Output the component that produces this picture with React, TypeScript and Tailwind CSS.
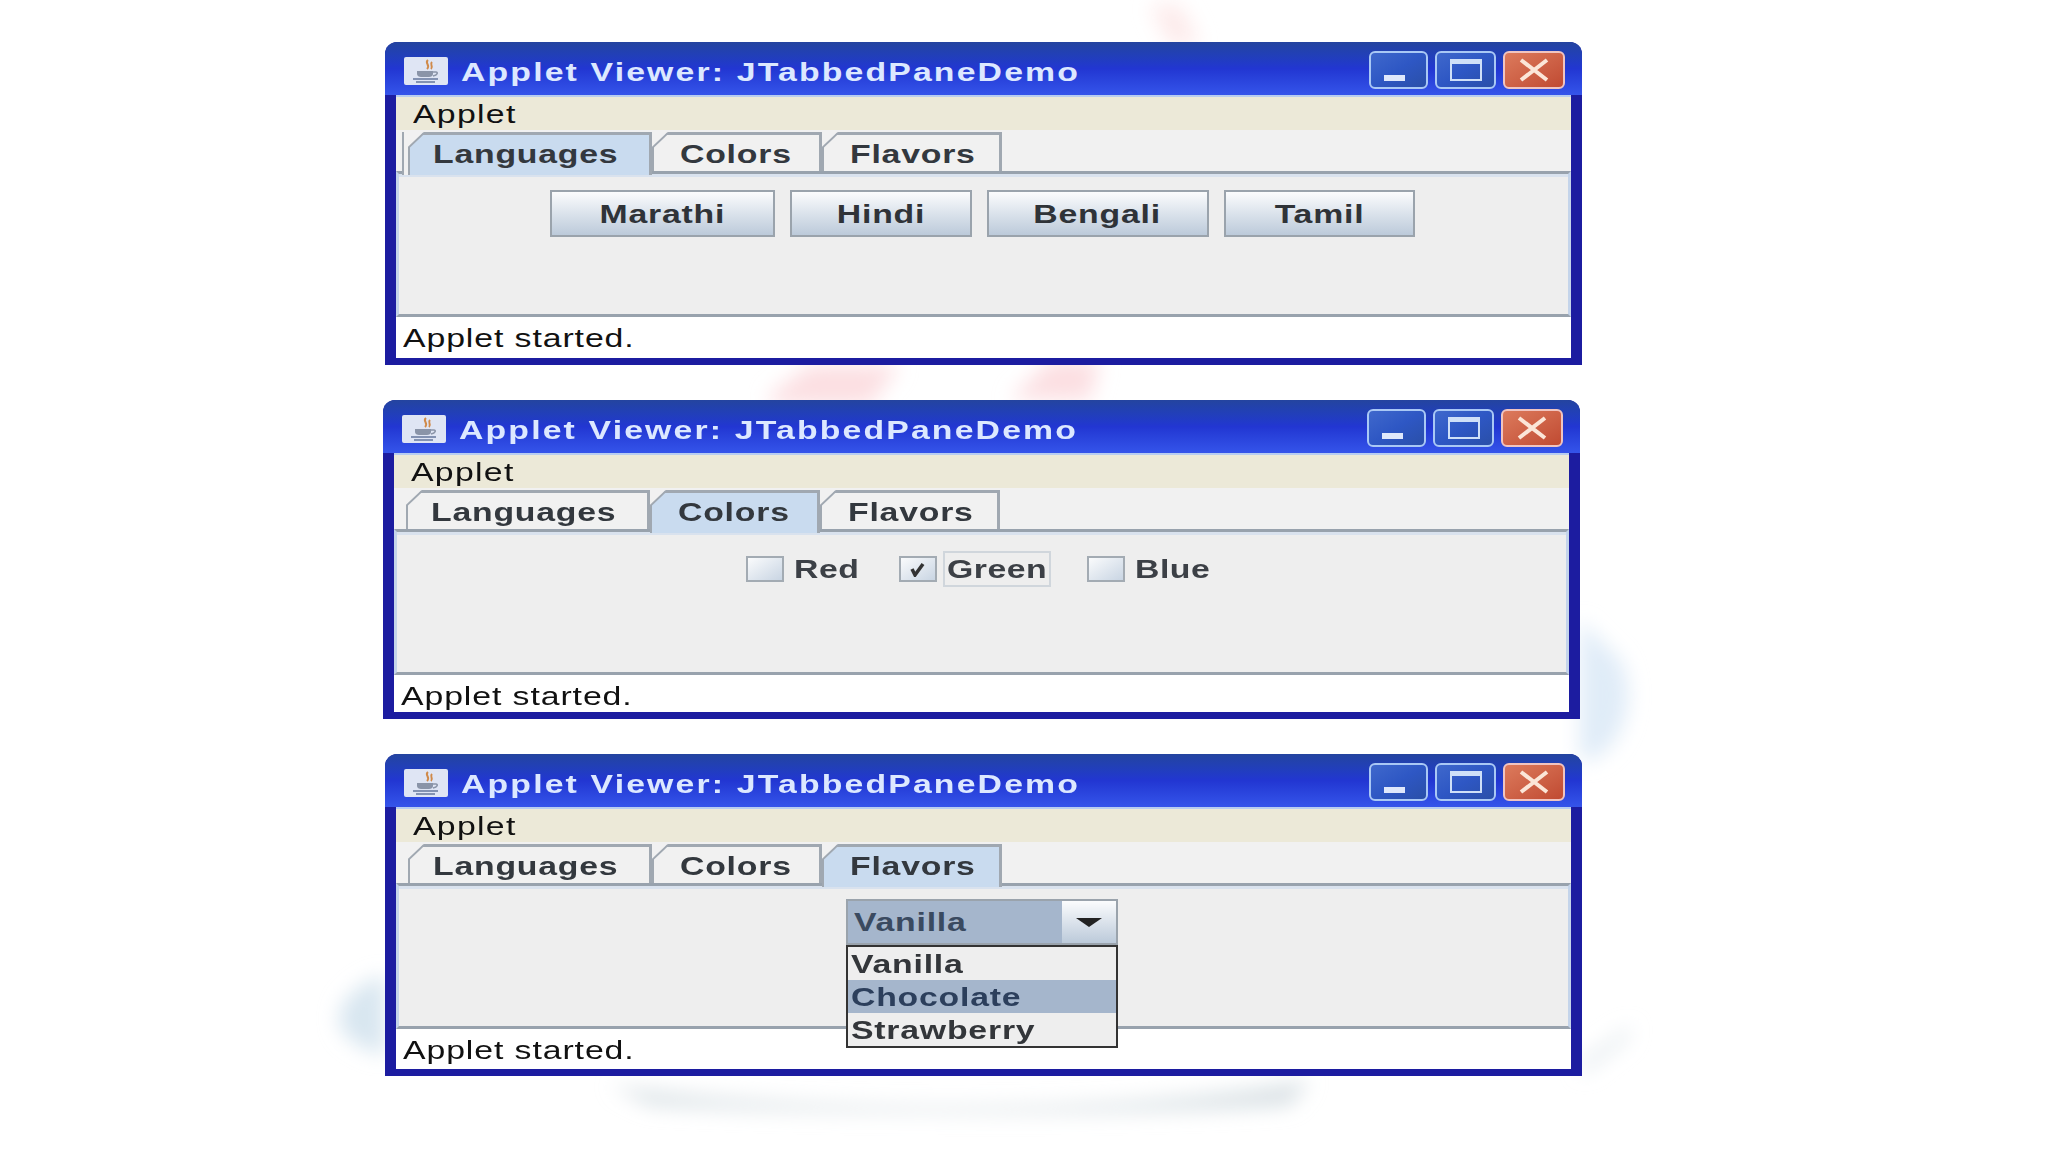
import React from "react";
import { clsx } from "clsx";

const TABS = ["Languages", "Colors", "Flavors"];
const TAB_WIDTHS = ["w-[244px]", "w-[170px]", "w-[180px]"];

function Wide({ children, className }: { children: React.ReactNode; className?: string }) {
  return <span className={clsx("inline-block origin-left scale-x-[1.3] whitespace-nowrap", className)}>{children}</span>;
}

function WideCenter({ children, className }: { children: React.ReactNode; className?: string }) {
  return <span className={clsx("inline-block origin-center scale-x-[1.3] whitespace-nowrap", className)}>{children}</span>;
}

function JavaIcon() {
  return (
    <svg viewBox="0 0 44 28" className="h-[28px] w-[44px]">
      <rect width="44" height="28" rx="2" fill="#dfe5f4" />
      <path d="M24 3c-4 3 3 5-1 9M28 5c-3 3 2 4-1 7" stroke="#d08a4a" strokeWidth="2" fill="none" />
      <path d="M13 14h16v3c0 2-2 3-4 3h-8c-2 0-4-1-4-3z" fill="#8a94a8" />
      <path d="M29 15h3c2 0 2 3-3 4" stroke="#8a94a8" strokeWidth="1.5" fill="none" />
      <path d="M9 22h25M12 25h19" stroke="#66779c" strokeWidth="1.5" />
    </svg>
  );
}

function TitleButtons() {
  return (
    <div className="mt-[3px] flex gap-[7px]">
      <div className="flex h-[38px] w-[59px] items-end rounded-[6px] border-2 border-[#a9c8f5] bg-gradient-to-br from-[#3f68cc] via-[#2e57c4] to-[#2a4fa8] pb-[6px] pl-[13px]">
        <div className="h-[6px] w-[21px] bg-[#dfe8fb]" />
      </div>
      <div className="flex h-[38px] w-[61px] items-center justify-center rounded-[6px] border-2 border-[#a9c8f5] bg-gradient-to-br from-[#3f68cc] via-[#2e57c4] to-[#2a4fa8]">
        <div className="h-[22px] w-[32px] border-2 border-t-[5px] border-[#cfe0f8]" />
      </div>
      <div className="flex h-[38px] w-[62px] items-center justify-center rounded-[6px] border-2 border-[#f0c4c0] bg-gradient-to-br from-[#dc7a5c] to-[#c04a32]">
        <svg viewBox="0 0 32 24" className="h-[24px] w-[32px]">
          <path d="M3 2l26 20M29 2L3 22" stroke="#fbe6d8" strokeWidth="4" />
        </svg>
      </div>
    </div>
  );
}

function Tab({ label, selected, width, first }: { label: string; selected: boolean; width: string; first: boolean }) {
  return (
    <div
      className={clsx(
        "relative flex items-center border-l-2 border-r-[3px] border-t-[3px] border-[#a0a8b1] pt-[2px] text-[#33383e]",
        first ? "pl-[23px]" : "pl-[26px]",
        width,
        selected ? "-mb-[4px] h-[43px] border-b-0 bg-[#c9dbef] pb-[4px] text-[#2c3b52]" : "h-[39px] bg-[#f1f1f1]",
        selected && first && "shadow-[-4px_0_0_#f1f1f1,-6px_0_0_#a0a8b1]"
      )}
    >
      <svg viewBox="0 0 16 16" className="absolute -left-[2px] -top-[3px] h-[16px] w-[16px]">
        <polygon points="0,0 16,0 0,16" fill="#f1f1f1" />
        <path d="M0 16L16 1" stroke="#a0a8b1" strokeWidth="2" />
      </svg>
      <Wide className="text-[26px] leading-none font-bold tracking-[0.6px]">{label}</Wide>
    </div>
  );
}

function Window({
  active,
  contentHeight,
  statusHeight,
  className,
  children,
}: {
  active: number;
  contentHeight: string;
  statusHeight: string;
  className?: string;
  children: React.ReactNode;
}) {
  return (
    <div className={clsx("relative flex w-[1197px] flex-col rounded-t-[12px] bg-[#1c1ca0] px-[11px] pb-[7px]", className)}>
      <div className="-mx-[11px] flex h-[53px] items-center rounded-t-[12px] bg-gradient-to-b from-[#24449f] via-[#2236d2] to-[#3554ea] pl-[19px] pr-[17px]">
        <div className="mt-[4px]">
          <JavaIcon />
        </div>
        <div className="ml-[13px] flex-1 pt-[6px] text-[26px] leading-none font-bold tracking-[1.65px] text-[#dce8ff]">
          <Wide>Applet Viewer: JTabbedPaneDemo</Wide>
        </div>
        <TitleButtons />
      </div>
      <div className="flex h-[35px] items-center border-t-2 border-[#b8cdf0] bg-[#ece9d8] pl-[17px] text-[26px] leading-none tracking-[1px] text-[#111]">
        <Wide>Applet</Wide>
      </div>
      <div className="flex h-[41px] items-end bg-[#f1f1f1] pl-[12px] pt-[1px]">
        {TABS.map((label, i) => (
          <Tab key={label} label={label} selected={i === active} first={i === 0} width={TAB_WIDTHS[i]} />
        ))}
      </div>
      <div className={clsx("border-x-[3px] border-b-[3px] border-t-[3px] border-x-[#c4d4ea] border-b-[#98a2ad] border-t-[#98a2ad] bg-[#eeeeee] shadow-[inset_0_3px_0_#d9e2ee]", contentHeight)}>
        {children}
      </div>
      <div className={clsx("bg-white pl-[7px] pt-[8px] text-[26px] leading-none tracking-[0.7px] text-[#111]", statusHeight)}>
        <Wide>Applet started.</Wide>
      </div>
    </div>
  );
}

function DemoButton({ label, width }: { label: string; width: string }) {
  return (
    <div className={clsx("flex h-[47px] items-center justify-center border-2 border-[#9aa3ac] bg-gradient-to-b from-[#fbfcfd] to-[#bccada] text-[26px] leading-none font-bold tracking-[0.6px] text-[#2f3338]", width)}>
      <WideCenter>{label}</WideCenter>
    </div>
  );
}

function DemoCheck({ label, width, checked, focused }: { label: string; width: string; checked?: boolean; focused?: boolean }) {
  return (
    <div className={clsx("flex items-center gap-[6px]", width)}>
      <div className="flex h-[26px] w-[38px] items-center justify-center border-2 border-[#a3abb3] bg-gradient-to-br from-[#fafbfc] to-[#c9d5e3]">
        {checked && (
          <svg viewBox="0 0 20 16" className="h-[16px] w-[20px]">
            <path d="M4 8l3 6L15 3" stroke="#333" strokeWidth="3.5" fill="none" />
          </svg>
        )}
      </div>
      <div
        className={clsx(
          "flex h-[36px] items-center border-2 px-[2px] text-[26px] leading-none font-bold tracking-[0.4px] text-[#3c4046]",
          focused ? "w-[108px] border-[#d0d6dc]" : "border-transparent"
        )}
      >
        <Wide>{label}</Wide>
      </div>
    </div>
  );
}

function Watermark() {
  return (
    <svg viewBox="0 0 2048 1152" className="absolute left-0 top-0 h-[1152px] w-[2048px]">
      <defs>
        <filter id="soft" x="-30%" y="-30%" width="160%" height="160%">
          <feGaussianBlur stdDeviation="10" />
        </filter>
      </defs>
      <g filter="url(#soft)">
        <path d="M1150 5l30 0 20 40-30 0z" fill="#fdeaea" />
        <path d="M770 395l40-30 90 0-30 40-100 0z" fill="#fcdfe2" />
        <path d="M1010 400l40-40 50 0-10 40z" fill="#fcdfe2" />
        <path d="M1580 620l40 40c20 40 0 90-30 100l-10 0z" fill="#e0ecf8" />
        <path d="M385 975c-30 10-50 30-45 50 5 15 25 25 45 30z" fill="#d8e6f0" />
        <path d="M610 1085c150 25 500 35 700-5l-20 25c-180 12-500 8-640 0z" fill="#d8e0e4" />
        <path d="M1582 1060l50-35-5 15-45 35z" fill="#e6ecf0" />
      </g>
    </svg>
  );
}

export default function App() {
  return (
    <div className="relative h-[1152px] w-[2048px] overflow-hidden bg-white font-['Liberation_Sans',Arial,sans-serif]">
      <Watermark />
      <div className="relative flex flex-col pl-[385px] pt-[42px] blur-[0.5px]">
        <Window active={0} contentHeight="h-[146px]" statusHeight="h-[41px]">
          <div className="flex justify-center gap-[15px] pr-[3px] pt-[16px]">
            <DemoButton label="Marathi" width="w-[225px]" />
            <DemoButton label="Hindi" width="w-[182px]" />
            <DemoButton label="Bengali" width="w-[222px]" />
            <DemoButton label="Tamil" width="w-[191px]" />
          </div>
        </Window>
        <Window active={1} contentHeight="h-[146px]" statusHeight="h-[37px]" className="-ml-[2px] mt-[35px]">
          <div className="flex pl-[349px] pt-[19px]">
            <DemoCheck label="Red" width="w-[153px]" />
            <DemoCheck label="Green" width="w-[188px]" checked focused />
            <DemoCheck label="Blue" width="w-[150px]" />
          </div>
        </Window>
        <Window active={2} contentHeight="h-[146px]" statusHeight="h-[40px]" className="mt-[35px]">
          <div className="relative flex justify-center pr-[4px] pt-[13px]">
            <div className="flex h-[46px] w-[272px] border-2 border-[#9aa3ac] bg-[#a5b6cc]">
              <div className="flex flex-1 items-center pl-[6px] text-[26px] leading-none font-bold tracking-[0.6px] text-[#3a4a60]">
                <Wide>Vanilla</Wide>
              </div>
              <div className="flex w-[54px] items-center justify-center bg-gradient-to-b from-[#fbfcfd] to-[#bccada]">
                <div className="h-0 w-0 border-x-[13px] border-t-[9px] border-x-transparent border-t-[#222]" />
              </div>
            </div>
            <div className="absolute left-[447px] top-[59px] z-10 flex w-[272px] flex-col border-2 border-[#333] bg-[#eeeeee] text-[26px] leading-none font-bold tracking-[0.6px] text-[#33363a]">
              <div className="flex h-[33px] items-center pl-[3px]"><Wide>Vanilla</Wide></div>
              <div className="flex h-[33px] items-center bg-[#a5b6cc] pl-[3px] text-[#2c3f5c]"><Wide>Chocolate</Wide></div>
              <div className="flex h-[33px] items-center pl-[3px]"><Wide>Strawberry</Wide></div>
            </div>
          </div>
        </Window>
      </div>
    </div>
  );
}
